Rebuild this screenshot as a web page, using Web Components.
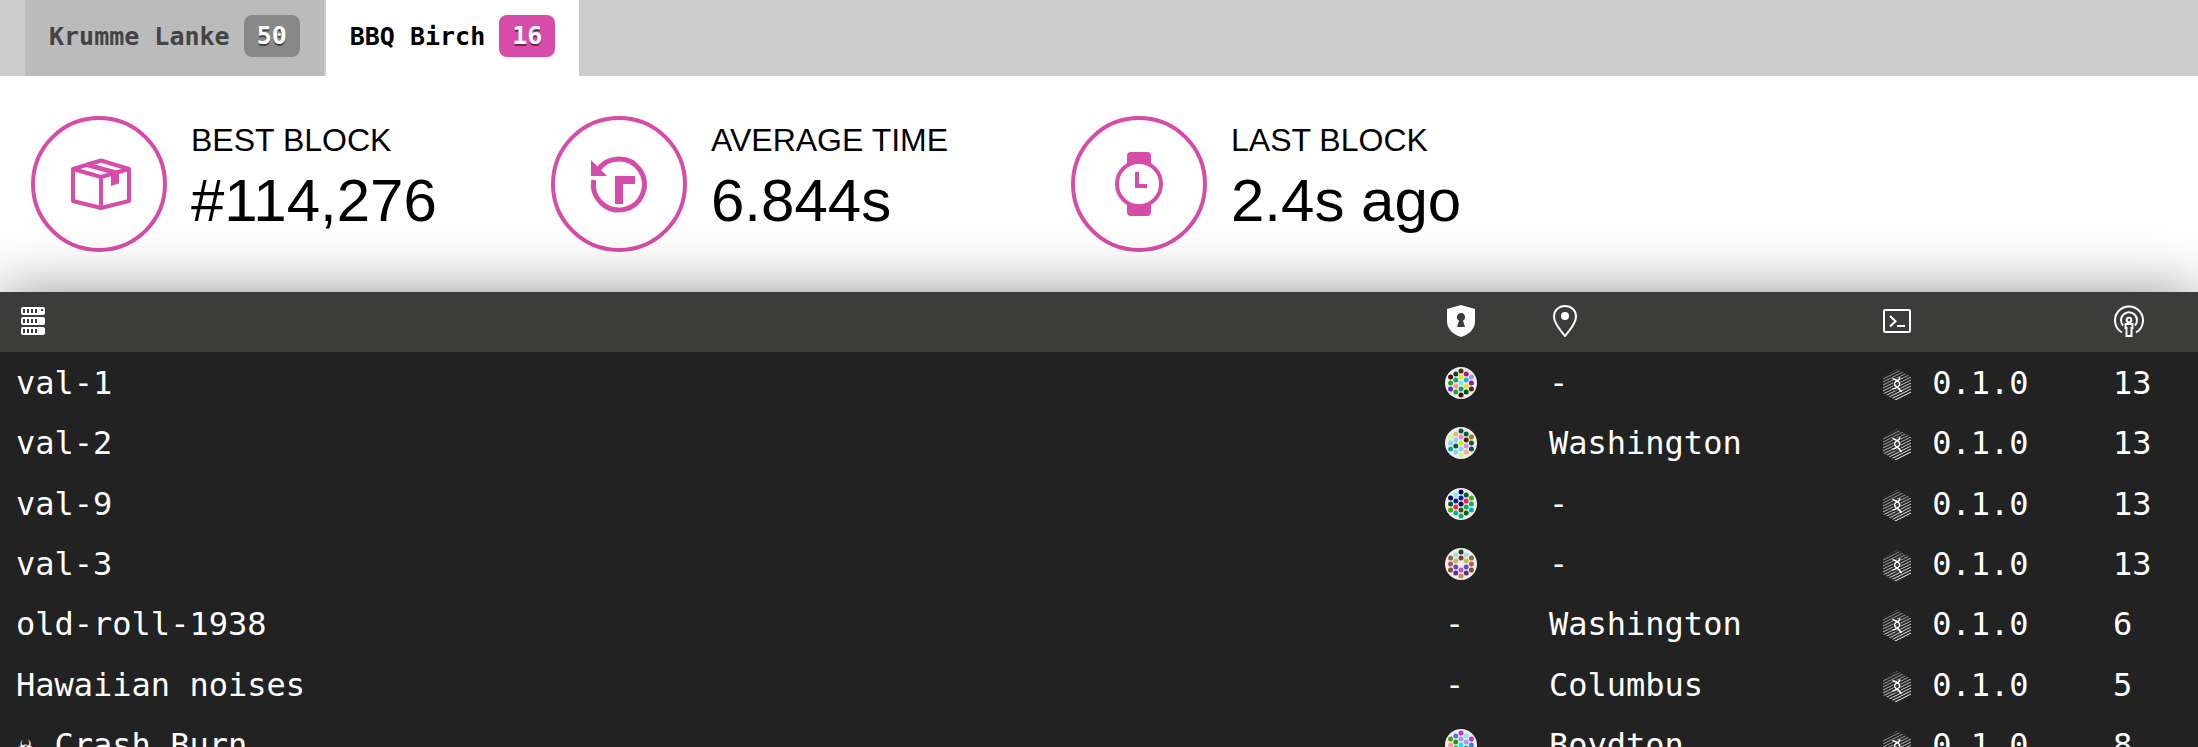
<!DOCTYPE html>
<html lang="en">
<head>
<meta charset="utf-8">
<title>Telemetry – BBQ Birch</title>
<style>
  body { margin: 0; background: #fff; font-family: "DejaVu Sans Mono", monospace; }
</style>
</head>
<body>
<telemetry-app>
  <chain-tabs slot="tabs">
    <chain-tab count="50">Krumme Lanke</chain-tab>
    <chain-tab count="16" active>BBQ Birch</chain-tab>
  </chain-tabs>
  <stat-tile slot="stats" icon="package" label="Best Block">#114,276</stat-tile>
  <stat-tile slot="stats" icon="history" label="Average Time">6.844s</stat-tile>
  <stat-tile slot="stats" icon="watch" label="Last Block">2.4s ago</stat-tile>
  <node-list></node-list>
</telemetry-app>

<script>
const ICONS = {
  package: `<path fill="none" stroke="currentColor" stroke-width="4" stroke-linejoin="round" d="M6 17 34 8.500 62 17V49L34 56 6 49ZM6 17 34 25 62 17M34 25V56"/><path fill="none" stroke="currentColor" stroke-width="4.500" d="M19 12.500 50 21"/><path fill="currentColor" d="M44 20 52 18V31.500L44 34Z"/>`,
  history: `<path fill="none" stroke="currentColor" stroke-width="5" d="M10.500 18.600A25.500 25.500 0 1 1 6.800 28"/><path fill="currentColor" d="M4 8V24H20ZM28 24H48V32H36V52H28Z"/>`,
  watch: `<circle cx="32" cy="32" r="22" fill="none" stroke="currentColor" stroke-width="4"/><path fill="currentColor" d="M20 14V4Q20 0 24 0H40Q44 0 44 4V14Q32 9 20 14ZM20 50V60Q20 64 24 64H40Q44 64 44 60V50Q32 55 20 50ZM28 20H32V32H40V36H28Z"/>`,
  server: `<path fill="currentColor" fill-rule="evenodd" d="M6 2H27Q29 2 29 4V8Q29 10 27 10H7Q5 10 5 8V4Q5 2 7 2ZM7 4V8H9V4ZM11 4V8H13V4ZM15 4V8H17V4ZM19 4V8H21V4ZM25 4V6H27V4ZM7 12H27Q29 12 29 14V18Q29 20 27 20H7Q5 20 5 18V14Q5 12 7 12ZM7 14V18H9V14ZM11 14V18H13V14ZM15 14V18H17V14ZM19 14V18H21V14ZM7 22H27Q29 22 29 24V28Q29 30 27 30H7Q5 30 5 28V24Q5 22 7 22ZM7 24V28H9V24ZM11 24V28H13V24ZM15 24V28H17V24ZM19 24V28H21V24Z"/>`,
  shield: `<path fill="currentColor" fill-rule="evenodd" d="M16 0 30 4V16Q30 27 16 32 2 27 2 16V4ZM16 8A4 4 0 0 0 14 15.500L12 22H20L18 15.500A4 4 0 0 0 16 8Z"/>`,
  pin: `<path fill="none" stroke="currentColor" stroke-width="2" d="M16 1C9.500 1 5 5.700 5 11.500 5 19 11.500 25 16 31 20.500 25 27 19 27 11.500 27 5.700 22.500 1 16 1Z"/><circle cx="16" cy="11" r="4" fill="currentColor"/>`,
  terminal: `<rect x="3" y="5" width="26" height="22" rx="1" fill="none" stroke="currentColor" stroke-width="2"/><path fill="none" stroke="currentColor" stroke-width="2" d="M9 11 14.500 16.200 9 21.500M16 21H24"/>`,
  broadcast: `<g fill="none" stroke="currentColor" stroke-width="2"><path d="M9 27.500A14 14 0 1 1 23 27.500"/><path d="M10 20.500A8 8 0 1 1 22 20.500"/><circle cx="16" cy="15" r="2.300"/><path d="M12.500 19H19.500V23H18.500V31H13.500V23H12.500Z"/></g>`,
  substrate: `<defs><clipPath id="hex"><path d="M16 0 30 8V24L16 32 2 24V8Z"/></clipPath><linearGradient id="fade" x1="0" y1="0" x2="0.400" y2="1"><stop offset="0" stop-color="#fff" stop-opacity="0.300"/><stop offset="0.500" stop-color="#fff" stop-opacity="0.650"/><stop offset="1" stop-color="#fff"/></linearGradient><mask id="tone"><rect width="32" height="32" fill="url(#fade)"/></mask></defs><g mask="url(#tone)"><path clip-path="url(#hex)" fill="none" stroke="currentColor" stroke-width="1" d="M0 8 32-8M0 11 32-5M0 14 32-2M0 17 32 1M0 20 32 4M0 23 32 7M0 26 32 10M0 29 32 13M0 32 32 16M0 35 32 19M0 38 32 22M0 41 32 25M0 44 32 28"/></g><path fill="#222" opacity=".5" d="M12 9H20V22H12Z"/><path fill="none" stroke="currentColor" stroke-width="1.500" d="M11.500 9.500Q16 11 18 13Q20 15.500 17 17.500Q15 19.500 11.500 20M19 8.500Q18.500 11 15 12.500Q12 15 15 17.500Q19 19.500 20.500 23"/>`
};

const icon = (name, size) =>
  `<svg viewBox="0 0 ${size} ${size}" width="${size}" height="${size}" aria-hidden="true">${ICONS[name]}</svg>`;

/* Dot colours are listed column by column, each one from top to bottom. */
function identicon(colours) {
  const columns = [3, 4, 5, 4, 3];
  let dots = "", n = 0;
  columns.forEach((count, c) => {
    for (let r = 0; r < count; r++) {
      const x = 32 + (c - 2) * 10.4, y = 32 + (r - (count - 1) / 2) * 12;
      dots += `<circle cx="${x}" cy="${y}" r="5" fill="#${colours[n++]}"/>`;
    }
  });
  return `<svg viewBox="0 0 64 64" width="32" height="32" aria-hidden="true"><circle cx="32" cy="32" r="32" fill="#eee"/>${dots}</svg>`;
}

class Base extends HTMLElement {
  connectedCallback() {
    if (!this.shadowRoot) this.attachShadow({ mode: "open" }).innerHTML = this.render();
  }
}

customElements.define("telemetry-app", class extends Base {
  render() {
    return `<style>
      :host { display: flex; flex-direction: column; height: 100vh; overflow: hidden; }
      header { display: flex; padding: 40px 31px; }
      main { flex: 1; position: relative; background: #222; box-shadow: 0 6px 60px rgba(0, 0, 0, .5); }
    </style>
    <slot name="tabs"></slot>
    <header><slot name="stats"></slot></header>
    <main><slot></slot></main>`;
  }
});

customElements.define("chain-tabs", class extends Base {
  render() {
    return `<style>
      :host { display: block; background: #ccc; }
      nav { display: flex; gap: 2px; padding: 0 25px; }
    </style><nav><slot></slot></nav>`;
  }
});

customElements.define("chain-tab", class extends Base {
  render() {
    return `<style>
      :host { display: block; }
      button { display: flex; align-items: center; gap: 14px; height: 76px; margin: 0; padding: 0 24px 4px 24px; border: 0;
        background: #bbb; color: #444; font: bold 25px "DejaVu Sans Mono", monospace; cursor: pointer; }
      .count { padding: 0 13px; border-radius: 8px; background: #888; color: #fff; line-height: 42px;
        text-shadow: 0 2px 0 rgba(0, 0, 0, .5); }
      :host([active]) button { background: #fff; color: #000; }
      :host([active]) .count { background: #d64ca8; }
    </style><button type="button"><span><slot></slot></span><span class="count">${this.getAttribute("count")}</span></button>`;
  }
});

customElements.define("stat-tile", class extends Base {
  render() {
    return `<style>
      :host { display: flex; flex: 0 1 520px; gap: 24px; font-family: "Liberation Sans", Arial, sans-serif; color: #000; }
      .ring { flex: none; box-sizing: border-box; width: 136px; height: 136px; padding: 32px; border: 4px solid #d64ca8;
        border-radius: 50%; color: #d64ca8; }
      svg { display: block; }
      .label { padding-top: 4px; font-size: 32px; line-height: 40px; text-transform: uppercase; white-space: nowrap; }
      .value { font-size: 60px; line-height: 82px; white-space: nowrap; }
    </style>
    <div class="ring">${icon(this.getAttribute("icon"), 64)}</div>
    <div><div class="label">${this.getAttribute("label")}</div><div class="value"><slot></slot></div></div>`;
  }
});

const DOTS = {
  a: "4a0a14 1fa81f 5a2be8 0a4a0a 10a078 ff9d88 1fa81f 4a300a e6e61e 8fdcf5 10a078 4a0a14 a8148a 1eb0e8 e6e61e 0a4a0a 96a0f5 a8148a 4a300a",
  b: "c0ff8a 8ad0ff 0aa898 ffaa7a 8ad0ff 065a38 8ad0ff 065a38 e080ff b0ff0a 8ad0ff c0ff8a 0a5a2a 5a1a0a e080ff ffaa7a a87a0a 065a38 065a38",
  c: "0a0a5a 0a5a1a 4aaa0a 7af0ff 0a1ab0 ff1a5a 0ab0a8 0a0a5a 0a1ab0 0a0a5a 4a4a0a 0ab05a 0a5a2a ff1a5a 0ab05a 0a5a1a 4aaa0a 0ab05a 0ab0a8",
  d: "8a6a3a c05068 8a4a3a a8e0e0 c0c050 6050c0 6a2a8a 1a4a1a 8a3a3a eeeeee c050d0 c08a50 a8e0e0 c0c050 6050c0 6a2a8a 8a6a3a c05068 8a4a3a",
  e: "5a9a1a ff9a8a 3a80e0 3a80e0 1a9a2a 1aa05a c030e0 c030e0 a898f0 20e0e0 1a9a2a 5a9a1a 90e0f0 a898f0 1aa05a 90e0f0 c030e0 3a80e0 ff9a8a"
};
const NODES = [
  ["val-1", "a", "-", 13],
  ["val-2", "b", "Washington", 13],
  ["val-9", "c", "-", 13],
  ["val-3", "d", "-", 13],
  ["old-roll-1938", "", "Washington", 6],
  ["Hawaiian noises", "", "Columbus", 5],
  ["☣ Crash Burn", "e", "Boydton", 8]
];

customElements.define("node-list", class extends Base {
  render() {
    const head = [["server", "Node"], ["shield", "Validator"], ["pin", "Location"], ["terminal", "Implementation"], ["broadcast", "Peers"]]
      .map(([name, label]) => `<th scope="col" aria-label="${label}">${icon(name, 32)}</th>`).join("");
    const rows = NODES.map(([name, dots, place, peers]) => `<tr><td>${name}</td>
      <td>${dots ? identicon(DOTS[dots].split(" ")) : "-"}</td><td>${place}</td>
      <td class="version">${icon("substrate", 32)} 0.1.0</td><td>${peers}</td></tr>`).join("");
    return `<style>
      :host { display: block; }
      table { width: 100%; table-layout: fixed; border-collapse: collapse; color: #fff; font: 32px "DejaVu Sans Mono", monospace; }
      th, td { height: 60px; padding: 0 0 0 16px; box-sizing: border-box; text-align: left; font-weight: normal; white-space: nowrap; }
      th { padding-bottom: 2px; }
      td { padding-top: 2px; }
      tr:nth-child(3n) td { height: 61px; }
      thead { background: #3c3c3b; }
      tbody { background: #222; }
      svg { display: block; }
      .version svg { display: inline-block; vertical-align: -7px; }
      .validator { width: 104px; } .location { width: 332px; } .version-col { width: 232px; } .peers { width: 101px; }
    </style>
    <table>
      <colgroup><col><col class="validator"><col class="location"><col class="version-col"><col class="peers"></colgroup>
      <thead><tr>${head}</tr></thead><tbody>${rows}</tbody>
    </table>`;
  }
});
</script>
</body>
</html>
